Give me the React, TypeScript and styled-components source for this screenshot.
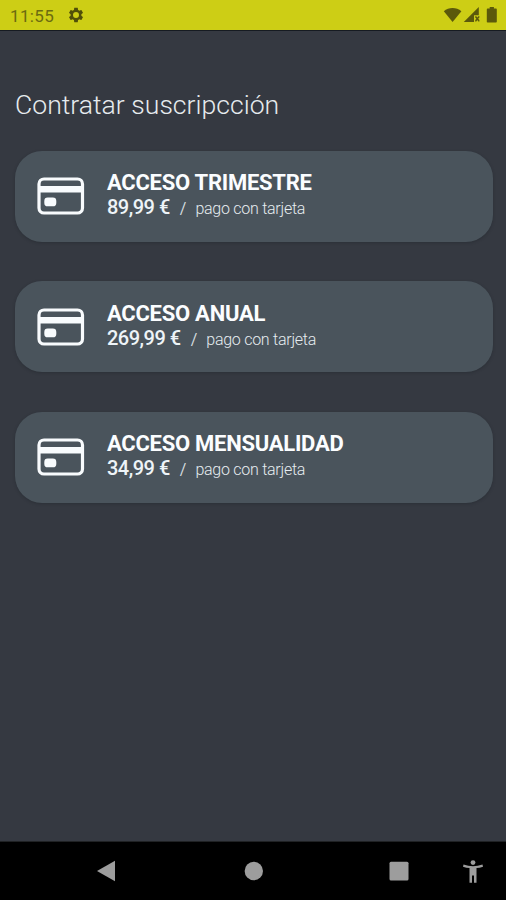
import React from 'react';
import styled, { createGlobalStyle } from 'styled-components';

const GlobalStyle = createGlobalStyle`
  * { box-sizing: border-box; }
  body { margin: 0; background: #353941; }
`;

const Screen = styled.div`
  display: flex;
  flex-direction: column;
  width: 100%;
  height: 900px;
  overflow: hidden;
  background: #353941;
  font-family: Roboto, sans-serif;
`;

const StatusBar = styled.header`
  display: flex;
  align-items: center;
  flex: none;
  height: 31px;
  padding: 0 7px 0 10px;
  background: #cdce15;
  border-bottom: 1px solid #161b22;
  color: #6c6b10;
`;

const Clock = styled.span`
  width: 57px;
  padding-top: 1px;
  font-size: 17px;
  line-height: 30px;
  letter-spacing: 0.35px;
  white-space: nowrap;
`;

const StatusIcons = styled.div`
  display: flex;
  align-items: center;
  margin-left: auto;
`;

const Content = styled.main`
  flex: 1;
  padding: 56px 13px 0 15px;
`;

const Title = styled.h1`
  margin: 0;
  height: 63.5px;
  font-size: 26.6px;
  font-weight: 300;
  line-height: 36px;
  color: #e6ebee;
  white-space: nowrap;
`;

const Plans = styled.div`
  display: flex;
  flex-direction: column;
  gap: 39.5px;
`;

const Card = styled.button`
  display: flex;
  align-items: center;
  width: 100%;
  height: 91px;
  padding: 0 0 0 22px;
  border: 0;
  border-radius: 27px;
  background: #4a545c;
  box-shadow: 0 1px 3px rgba(25, 32, 36, 0.35);
  font-family: inherit;
  text-align: left;
`;

const Details = styled.div`
  margin: -2px 0 0 22px;
`;

const PlanName = styled.div`
  height: 25px;
  font-size: 22px;
  font-weight: 700;
  line-height: 26px;
  letter-spacing: -0.26px;
  color: #fbfdff;
  white-space: nowrap;
`;

const PriceRow = styled.div`
  display: flex;
  align-items: baseline;
  height: 25px;
  line-height: 24px;
  white-space: nowrap;
`;

const Price = styled.span`
  font-size: 20px;
  font-weight: 500;
  letter-spacing: -0.5px;
  color: #eef4f8;
`;

const Divider = styled.span`
  margin: 0 9px 0 10px;
  font-size: 16px;
  color: #d5dbdf;
`;

const Method = styled.span`
  font-size: 16px;
  font-weight: 300;
  letter-spacing: -0.26px;
  color: #e6ecf0;
`;

const NavBar = styled.nav`
  display: grid;
  grid-template-columns: 180px 147px 130px 49px;
  align-items: center;
  flex: none;
  height: 59px;
  border-top: 1px solid #202224;
  background: #000;
  color: #9d9d9d;
`;

const NavButton = styled.span<{ $offset: number }>`
  display: flex;
  padding-left: ${({ $offset }) => $offset}px;
`;

const GearIcon = () => (
  <svg width="18" height="18" viewBox="0 0 24 24" fill="#504f09" fillRule="evenodd">
    <path d="M19.14 12.94c.04-.3.06-.61.06-.94 0-.32-.02-.64-.07-.94l2.03-1.58c.18-.14.23-.41.12-.61l-1.92-3.32c-.12-.22-.37-.29-.59-.22l-2.39.96c-.5-.38-1.03-.7-1.62-.94l-.36-2.54c-.04-.24-.24-.41-.48-.41h-3.84c-.24 0-.43.17-.47.41l-.36 2.54c-.59.24-1.13.57-1.62.94l-2.39-.96c-.22-.08-.47 0-.59.22L2.74 8.87c-.12.21-.08.47.12.61l2.03 1.58c-.05.3-.09.63-.09.94s.02.64.07.94l-2.03 1.58c-.18.14-.23.41-.12.61l1.92 3.32c.12.22.37.29.59.22l2.39-.96c.5.38 1.03.7 1.62.94l.36 2.54c.05.24.24.41.48.41h3.84c.24 0 .44-.17.47-.41l.36-2.54c.59-.24 1.13-.56 1.62-.94l2.39.96c.22.08.47 0 .59-.22l1.92-3.32c.12-.22.07-.47-.12-.61l-2.01-1.58zM12 16a4 4 0 1 1 0-8 4 4 0 0 1 0 8z" />
  </svg>
);

const SignalIcons = () => (
  <svg width="56" height="18" viewBox="0 0 56 18" fill="#5b590b">
    <path d="M.8 5.2C5.7.8 13.4.8 18.4 5.2L9.6 16Z" />
    <path d="M35.8 1V9.2H31V16H20.8Z" />
    <path d="M32.2 10.2h1.1l1 1.4 1-1.4h1.1v1.3l-1.2 1.3 1.2 1.3v1.3h-1.1l-1-1.4-1 1.4h-1.1v-1.3l1.2-1.3-1.2-1.3z" />
    <path d="M44.6 2.6h2.1V1.1h4.2v1.5h2.1q.8 0 .8.8v12.4q0 .8-.8.8h-8.4q-.8 0-.8-.8v-12.4q0-.8.8-.8z" />
  </svg>
);

const CardIcon = () => (
  <svg width="48" height="38" viewBox="0 0 48 38" fill="none">
    <rect x="2" y="2" width="43.5" height="34" rx="5" stroke="#f8fbfd" strokeWidth="3.2" />
    <path d="M2 9H46V15.4H2Z" fill="#f8fbfd" />
    <rect x="7.3" y="20.5" width="12" height="8.8" rx="3.4" fill="#f8fbfd" />
  </svg>
);

const BackIcon = () => (
  <svg width="20" height="22" viewBox="0 0 20 22" fill="currentColor">
    <path d="M1 11 19 .8V21.2Z" />
  </svg>
);

const HomeIcon = () => (
  <svg width="20" height="20" viewBox="0 0 20 20" fill="currentColor">
    <circle cx="9.8" cy="10" r="9.2" />
  </svg>
);

const RecentIcon = () => (
  <svg width="20" height="20" viewBox="0 0 20 20" fill="currentColor">
    <rect x=".5" y=".7" width="19" height="18.8" rx="1.5" />
  </svg>
);

const AccessibilityIcon = () => (
  <svg width="20" height="23" viewBox="0 0 20 23" fill="currentColor">
    <circle cx="10" cy="2.6" r="2.4" />
    <path d="M.5 4.6Q10 7.7 19.5 4.6L20 6.7Q16.6 7.8 13.5 8.1V22.7H11V15.6H9V22.7H6.5V8.1Q3.4 7.8 0 6.7Z" />
  </svg>
);

const plans = [
  { name: 'ACCESO TRIMESTRE', price: '89,99 €' },
  { name: 'ACCESO ANUAL', price: '269,99 €' },
  { name: 'ACCESO MENSUALIDAD', price: '34,99 €' },
];

export default function App() {
  return (
    <>
      <GlobalStyle />
      <Screen>
        <StatusBar>
          <Clock>11:55</Clock>
          <GearIcon />
          <StatusIcons>
            <SignalIcons />
          </StatusIcons>
        </StatusBar>
        <Content>
          <Title>Contratar suscripcción</Title>
          <Plans>
            {plans.map(({ name, price }) => (
              <Card key={name}>
                <CardIcon />
                <Details>
                  <PlanName>{name}</PlanName>
                  <PriceRow>
                    <Price>{price}</Price>
                    <Divider>/</Divider>
                    <Method>pago con tarjeta</Method>
                  </PriceRow>
                </Details>
              </Card>
            ))}
          </Plans>
        </Content>
        <NavBar>
          <NavButton $offset={96}><BackIcon /></NavButton>
          <NavButton $offset={64}><HomeIcon /></NavButton>
          <NavButton $offset={62}><RecentIcon /></NavButton>
          <NavButton $offset={6}><AccessibilityIcon /></NavButton>
        </NavBar>
      </Screen>
    </>
  );
}
